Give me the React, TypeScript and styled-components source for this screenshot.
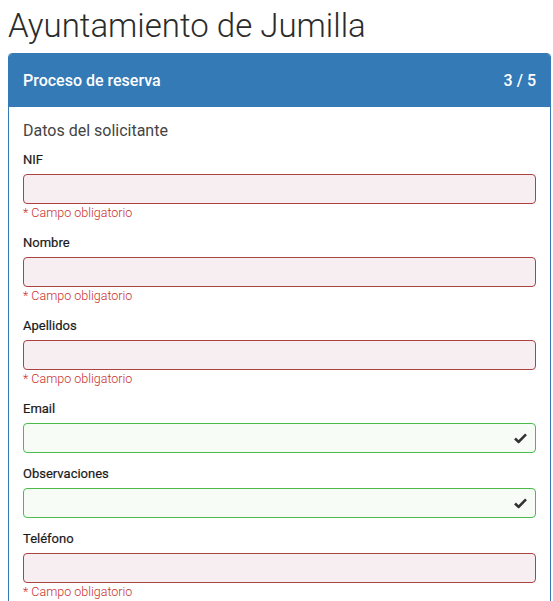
import styled, { createGlobalStyle } from "styled-components";

const GlobalStyle = createGlobalStyle`
  body {
    margin: 0;
    padding: 0 2px 0 8px;
    font-family: Roboto, "Liberation Sans", sans-serif;
    color: #333;
    background: #fff;
  }
  * {
    box-sizing: border-box;
  }
`;

type Field = {
  label: string;
  state: "error" | "success";
};

const fields: Field[] = [
  { label: "NIF", state: "error" },
  { label: "Nombre", state: "error" },
  { label: "Apellidos", state: "error" },
  { label: "Email", state: "success" },
  { label: "Observaciones", state: "success" },
  { label: "Teléfono", state: "error" },
];

const CheckIcon = () => (
  <svg width="13" height="11" viewBox="0 0 13 11">
    <path d="M1 6 L4.6 9.4 L12 1.8" fill="none" stroke="#333" strokeWidth="2.6" />
  </svg>
);

const App = () => {
  return (
    <>
      <GlobalStyle />
      <Title>Ayuntamiento de Jumilla</Title>
      <Panel>
        <PanelHeader>
          <span>Proceso de reserva</span>
          <span>3 / 5</span>
        </PanelHeader>
        <PanelBody>
          <SectionTitle>Datos del solicitante</SectionTitle>
          {fields.map((f) => (
            <FormGroup key={f.label}>
              <Label>{f.label}</Label>
              <InputWrap>
                <Input $state={f.state} />
                {f.state === "success" && (
                  <Feedback>
                    <CheckIcon />
                  </Feedback>
                )}
              </InputWrap>
              {f.state === "error" && <HelpText>* Campo obligatorio</HelpText>}
            </FormGroup>
          ))}
        </PanelBody>
      </Panel>
    </>
  );
};

export default App;

const Title = styled.h1`
  margin: 0;
  padding-top: 6px;
  font-size: 33px;
  font-weight: 300;
  line-height: 40px;
  color: #2b2b2b;
`;

const Panel = styled.div`
  margin-top: 7px;
  border: 1px solid #337ab7;
  border-radius: 4px;
  background: #fff;
  overflow: hidden;
`;

const PanelHeader = styled.div`
  display: flex;
  justify-content: space-between;
  align-items: center;
  height: 53px;
  padding: 0 14px;
  background: #337ab7;
  color: #fff;
  font-size: 16px;
  font-weight: 500;
`;

const PanelBody = styled.div`
  padding: 12px 14px 0;
`;

const SectionTitle = styled.div`
  font-size: 16px;
  line-height: 24px;
  margin-bottom: 8px;
  color: #444;
`;

const FormGroup = styled.div`
  margin-bottom: 12px;
`;

const Label = styled.label`
  display: block;
  font-size: 13px;
  font-weight: 400;
  line-height: 18px;
  margin-bottom: 5px;
  color: #1a1a1a;
  -webkit-text-stroke: 0.2px #1a1a1a;
`;

const InputWrap = styled.div`
  position: relative;
`;

const Input = styled.input<{ $state: "error" | "success" }>`
  display: block;
  width: 100%;
  height: 30px;
  border-radius: 4px;
  outline: none;
  border: 1px solid ${(p) => (p.$state === "error" ? "#a94442" : "#4cbb4c")};
  background: ${(p) => (p.$state === "error" ? "#f7eef1" : "#f7fcf6")};
`;

const Feedback = styled.span`
  position: absolute;
  right: 9px;
  top: 50%;
  transform: translateY(-50%);
  display: flex;
`;

const HelpText = styled.div`
  font-size: 12.5px;
  font-weight: 300;
  line-height: 18px;
  color: #c9302c;
`;
